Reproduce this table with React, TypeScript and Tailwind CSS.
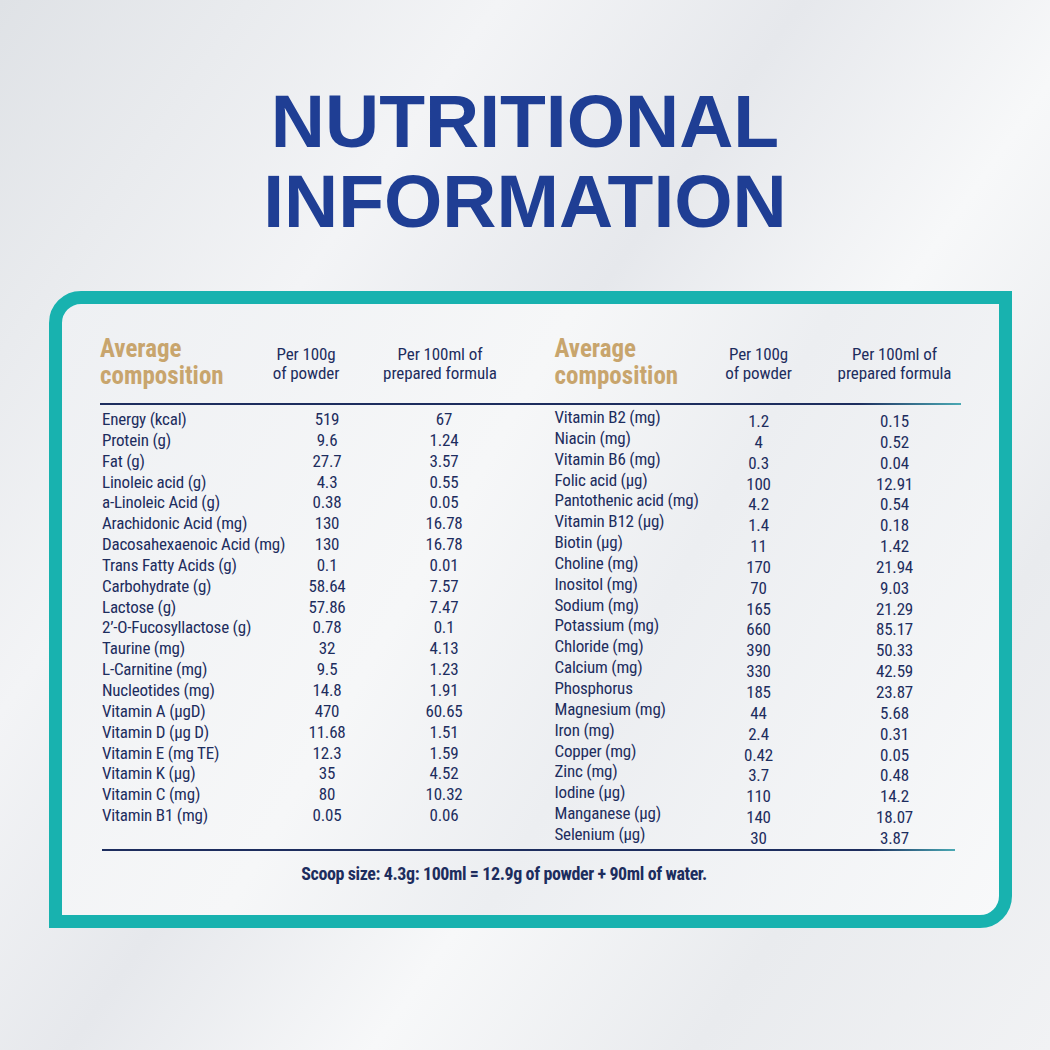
import React from "react";

const left: [string, string, string][] = [
  ["Energy (kcal)", "519", "67"],
  ["Protein (g)", "9.6", "1.24"],
  ["Fat (g)", "27.7", "3.57"],
  ["Linoleic acid (g)", "4.3", "0.55"],
  ["a-Linoleic Acid (g)", "0.38", "0.05"],
  ["Arachidonic Acid (mg)", "130", "16.78"],
  ["Dacosahexaenoic Acid (mg)", "130", "16.78"],
  ["Trans Fatty Acids (g)", "0.1", "0.01"],
  ["Carbohydrate (g)", "58.64", "7.57"],
  ["Lactose (g)", "57.86", "7.47"],
  ["2’-O-Fucosyllactose (g)", "0.78", "0.1"],
  ["Taurine (mg)", "32", "4.13"],
  ["L-Carnitine (mg)", "9.5", "1.23"],
  ["Nucleotides (mg)", "14.8", "1.91"],
  ["Vitamin A (µgD)", "470", "60.65"],
  ["Vitamin D (µg D)", "11.68", "1.51"],
  ["Vitamin E (mg TE)", "12.3", "1.59"],
  ["Vitamin K (µg)", "35", "4.52"],
  ["Vitamin C (mg)", "80", "10.32"],
  ["Vitamin B1 (mg)", "0.05", "0.06"],
];

const right: [string, string, string][] = [
  ["Vitamin B2 (mg)", "1.2", "0.15"],
  ["Niacin (mg)", "4", "0.52"],
  ["Vitamin B6 (mg)", "0.3", "0.04"],
  ["Folic acid (µg)", "100", "12.91"],
  ["Pantothenic acid (mg)", "4.2", "0.54"],
  ["Vitamin B12 (µg)", "1.4", "0.18"],
  ["Biotin (µg)", "11", "1.42"],
  ["Choline (mg)", "170", "21.94"],
  ["Inositol (mg)", "70", "9.03"],
  ["Sodium (mg)", "165", "21.29"],
  ["Potassium (mg)", "660", "85.17"],
  ["Chloride (mg)", "390", "50.33"],
  ["Calcium (mg)", "330", "42.59"],
  ["Phosphorus", "185", "23.87"],
  ["Magnesium (mg)", "44", "5.68"],
  ["Iron (mg)", "2.4", "0.31"],
  ["Copper (mg)", "0.42", "0.05"],
  ["Zinc (mg)", "3.7", "0.48"],
  ["Iodine (µg)", "110", "14.2"],
  ["Manganese (µg)", "140", "18.07"],
  ["Selenium (µg)", "30", "3.87"],
];

function Heading({ cols }: { cols: string }) {
  return (
    <div className={`grid ${cols} items-start`}>
      <p className="text-[25px] font-bold leading-[27px] text-[#c8a56d]">
        Average
        <br />
        composition
      </p>
      <p className="mt-[10px] text-center text-[17px] leading-[19px] tracking-[-0.1px]">
        Per 100g
        <br />
        of powder
      </p>
      <p className="mt-[10px] text-center text-[17px] leading-[19px] tracking-[-0.1px]">
        Per 100ml of
        <br />
        prepared formula
      </p>
    </div>
  );
}

export default function App() {
  return (
    <div className="h-[1050px] w-[1050px] overflow-hidden bg-[linear-gradient(125deg,#dfe2e6_0%,#f3f4f6_28%,#e6e8ec_45%,#f7f8f9_62%,#e9ebee_80%,#f1f2f4_100%)]">
      <h1 className="pt-[81px] text-center font-['Liberation_Sans',sans-serif] text-[75px] font-bold leading-[80px] text-[#1f3e94]">
        NUTRITIONAL
        <br />
        INFORMATION
      </h1>

      <div className="ml-[49px] mt-[50px] h-[637px] w-[963px] rounded-tl-[32px] rounded-br-[32px] border-[13px] border-[#18b2af] bg-[linear-gradient(120deg,#eef0f3_0%,#f6f7f8_40%,#eceef1_60%,#f8f9fa_100%)] pl-[38px] pt-[31px] font-['Roboto_Condensed','Roboto',sans-serif] text-[#1d2d5e]">
        <div className="flex">
          <div className="w-[453px]">
            <Heading cols="grid-cols-[160px_92px_176px]" />
          </div>
          <div className="w-[447px] pl-[2px]">
            <Heading cols="grid-cols-[158px_92px_180px]" />
          </div>
        </div>

        <div className="mt-[14px] h-[2px] w-[861px] bg-[linear-gradient(90deg,#1d2d5e_0%,#1d2d5e_88%,#4aa9b4_100%)]" />

        <div className="mt-[4px] flex text-[17px] leading-[20.85px] tracking-[-0.2px]">
          <div className="w-[453px] pl-[2px]">
            {left.map(([n, a, b]) => (
              <div key={n} className="grid grid-cols-[178px_94px_140px]">
                <span className="whitespace-nowrap">{n}</span>
                <span className="text-center">{a}</span>
                <span className="text-center">{b}</span>
              </div>
            ))}
          </div>
          <div className="w-[447px] pl-[2px]">
            {right.map(([n, a, b]) => (
              <div key={n} className="grid grid-cols-[158px_92px_180px]">
                <span className="-translate-y-[2px] whitespace-nowrap">{n}</span>
                <span className="translate-y-[2px] text-center">{a}</span>
                <span className="translate-y-[2px] text-center">{b}</span>
              </div>
            ))}
          </div>
        </div>

        <div className="ml-[2px] mt-[2px] h-[2px] w-[853px] bg-[linear-gradient(90deg,#1d2d5e_0%,#1d2d5e_90%,#4aa9b4_100%)]" />

        <p className="mt-[11px] w-[808px] text-center text-[18px] font-bold leading-[24px] tracking-[-0.4px]">
          Scoop size: 4.3g: 100ml = 12.9g of powder + 90ml of water.
        </p>
      </div>
    </div>
  );
}
